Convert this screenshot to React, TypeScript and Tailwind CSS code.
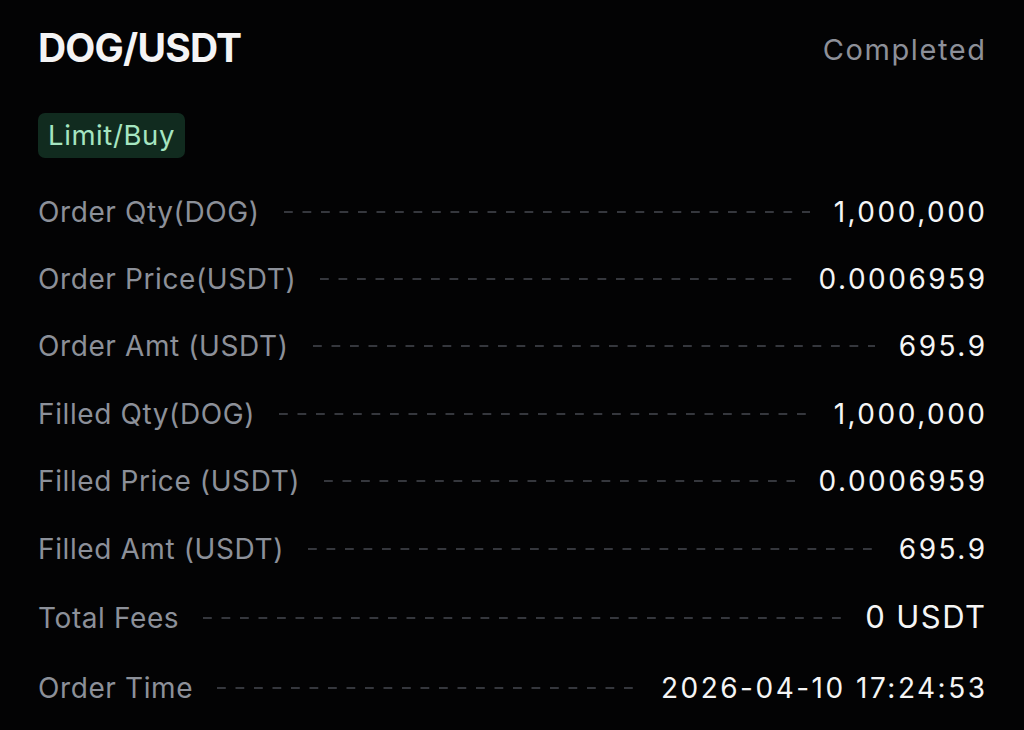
import React from 'react';

const rows: { label: string; value: string; h: string; big?: boolean }[] = [
  { label: 'Order Qty(DOG)', value: '1,000,000', h: 'h-[67px]' },
  { label: 'Order Price(USDT)', value: '0.0006959', h: 'h-[67px]' },
  { label: 'Order Amt (USDT)', value: '695.9', h: 'h-[68px]' },
  { label: 'Filled Qty(DOG)', value: '1,000,000', h: 'h-[67px]' },
  { label: 'Filled Price (USDT)', value: '0.0006959', h: 'h-[68px]' },
  { label: 'Filled Amt (USDT)', value: '695.9', h: 'h-[67px]' },
  { label: 'Total Fees', value: '0 USDT', h: 'h-[71px]', big: true },
  { label: 'Order Time', value: '2026-04-10 17:24:53', h: 'h-[70px]' },
];

export default function App() {
  return (
    <div
      className="w-[1024px] h-[730px] bg-[#030304] overflow-hidden px-[38px] pt-[26px]"
      style={{ fontFamily: 'Inter, "Noto Sans", sans-serif' }}
    >
      {/* Header */}
      <div className="flex items-center justify-between h-[45px]">
        <h1 className="text-[39px] font-bold text-[#f4f4f5] tracking-[-0.8px]">DOG/USDT</h1>
        <span className="text-[29px] text-[#8d9099] tracking-[1.6px] mr-[-0.6px] mt-[3px]">Completed</span>
      </div>

      <div className="mt-[42px] inline-flex items-center h-[45px] px-[10px] rounded-[7px] bg-[#112b1f]">
        <span className="text-[27.5px] text-[#a6e5c1] tracking-[0.6px]">Limit/Buy</span>
      </div>

      {/* Details */}
      <div className="mt-[20px] flex flex-col">
        {rows.map((r) => (
          <div key={r.label} className={`flex items-center ${r.h}`}>
            <span className="text-[28px] text-[#8c9099] tracking-[0.6px] whitespace-nowrap">{r.label}</span>
            <div className="flex-1 mx-6 h-[2px] bg-[linear-gradient(to_right,#35373d_50%,transparent_50%)] bg-[length:18.5px_2px]" />
            {r.big ? (
              <span className="text-[31px] text-[#f5f5f5] tracking-[1.4px] mr-[-0.4px] whitespace-nowrap">
                {r.value}
              </span>
            ) : (
              <span className="text-[28px] text-[#f5f5f5] tracking-[2.5px] mr-[-1.5px] whitespace-nowrap">
                {r.value}
              </span>
            )}
          </div>
        ))}
      </div>
    </div>
  );
}
